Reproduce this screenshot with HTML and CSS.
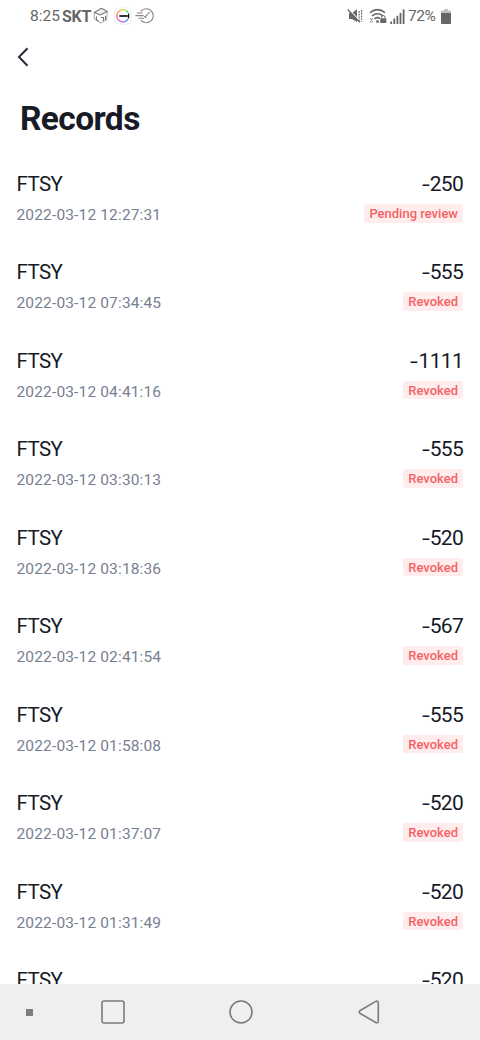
FILE: index.html
```html
<!DOCTYPE html>
<html lang="en">
<head>
<meta charset="utf-8">
<title>Records</title>
<link rel="stylesheet" href="styles.css">
</head>
<body>
<div class="screen">
  <header class="status">
    <span class="clock">8:25</span>
    <span class="carrier">SKT</span>
    <svg class="cube" width="16" height="18" viewBox="0 0 16 18" fill="none" stroke="#777" stroke-width="1.1" stroke-linejoin="round"><path d="M1.300 5.500V11.500L7.500 16l6-3 .8-8" stroke="#b5b5b5"/><path d="M1.300 5.500 8.500 1.200 14.300 4.500 7 8z" fill="#f2f2f2"/><path d="M3.500 9.500v3.300l2 1.400M8 10.500h2.500v3.500M12.500 9v4"/></svg>
    <svg class="app" width="18" height="18" viewBox="0 0 18 18" fill="none"><rect x="1" y="1" width="16" height="16" rx="2" fill="#fff" stroke="#eee"/><g stroke-width="1.2"><path d="M3 7.500A6.200 6.200 0 0 1 7 3" stroke="#ff9a3d"/><path d="M7 3a6.200 6.200 0 0 1 5 .6" stroke="#d3df35"/><path d="M12 3.600A6.200 6.200 0 0 1 14.900 7" stroke="#5bd879"/><path d="M14.600 11A6.200 6.200 0 0 1 11 14.600" stroke="#6b8cff"/><path d="M11 14.600A6.200 6.200 0 0 1 5 13.500" stroke="#b25cf5"/><path d="M5 13.500A6.200 6.200 0 0 1 3 7.500" stroke="#fa4ba5"/></g><path d="M5.300 9h8.500" stroke="#333" stroke-width="2"/><path d="M14.600 7v4" stroke="#111" stroke-width="1.3"/></svg>
    <svg class="gauge" width="19" height="18" viewBox="0 0 19 18" fill="none" stroke="#888" stroke-width="1.1" stroke-linecap="round"><path d="M6 4.200a7 7 0 1 1 0 9.200M2.200 6h5M.8 8.600h7.500M3.800 11.200h5"/><path d="m10.500 9.300 4-4M9.500 9.500l1.500 1"/></svg>
    <span class="spacer"></span>
    <svg width="16" height="16" viewBox="0 0 16 16" fill="none" stroke="#666"><path d="M2 5h3l5-3.700v12.800L5 11H2z" fill="#666" stroke="none"/><path d="m1.800 1.200 11.500 12.500" stroke="#fff" stroke-width="1.400"/><path d="m.8 1.500 12 12.700" stroke-width="1.300"/><path d="M12.200 3v10M14.600 2v12" stroke-dasharray="1.700 1.100" stroke-width="1.200"/></svg>
    <svg class="wifi" width="18" height="16" viewBox="0 0 18 16" fill="none" stroke="#666" stroke-width="1.600"><path d="M1 4.600q7.500-6 15 0M3 8q5.500-4.400 11 0M5.500 10.800q3-2.200 5.500-.2"/><path d="m1 10 1.500 2L4 10M1 14.500 2.500 12.700 4 14.500" stroke-width=".8"/><circle cx="8.500" cy="13.600" r="1.400" fill="#666" stroke="none"/><path d="M12.600 10.500V9.200a1.700 1.700 0 0 1 3.400 0v1.300" stroke-width="1"/><path d="M11.300 10.300h6V15h-6z" fill="#666" stroke="none"/></svg>
    <svg class="signal" width="15" height="15" viewBox="0 0 15 15" stroke="#666" stroke-width="1.800"><path d="M1.200 12.500V15M4.300 9.500V15M7.400 6.800V15M10.500 4V15M13.600 .5V15"/></svg>
    <span class="percent">72%</span>
    <svg class="battery" width="10" height="15" viewBox="0 0 10 15"><path d="M3 0h4v1.500h2q1 0 1 1V5H0V2.500q0-1 1-1h2z" fill="#c2c2c2"/><path d="M0 4h10v10q0 1-1 1H1q-1 0-1-1z" fill="#666"/></svg>
  </header>
  <nav class="topbar">
    <svg width="12" height="20" viewBox="0 0 12 20" fill="none" stroke="#292c38" stroke-width="2"><path d="M10.500 1.300 2 10l8.500 8.700"/></svg>
  </nav>
  <h1 class="title">Records</h1>
  <main class="list">
    <section class="row"><div><div class="name">FTSY</div><div class="date">2022-03-12 12:27:31</div></div><div class="right"><div class="amount"><span class="minus">-</span>250</div><div class="badge">Pending review</div></div></section>
    <section class="row"><div><div class="name">FTSY</div><div class="date">2022-03-12 07:34:45</div></div><div class="right"><div class="amount"><span class="minus">-</span>555</div><div class="badge">Revoked</div></div></section>
    <section class="row"><div><div class="name">FTSY</div><div class="date">2022-03-12 04:41:16</div></div><div class="right"><div class="amount"><span class="minus">-</span>1111</div><div class="badge">Revoked</div></div></section>
    <section class="row"><div><div class="name">FTSY</div><div class="date">2022-03-12 03:30:13</div></div><div class="right"><div class="amount"><span class="minus">-</span>555</div><div class="badge">Revoked</div></div></section>
    <section class="row"><div><div class="name">FTSY</div><div class="date">2022-03-12 03:18:36</div></div><div class="right"><div class="amount"><span class="minus">-</span>520</div><div class="badge">Revoked</div></div></section>
    <section class="row"><div><div class="name">FTSY</div><div class="date">2022-03-12 02:41:54</div></div><div class="right"><div class="amount"><span class="minus">-</span>567</div><div class="badge">Revoked</div></div></section>
    <section class="row"><div><div class="name">FTSY</div><div class="date">2022-03-12 01:58:08</div></div><div class="right"><div class="amount"><span class="minus">-</span>555</div><div class="badge">Revoked</div></div></section>
    <section class="row"><div><div class="name">FTSY</div><div class="date">2022-03-12 01:37:07</div></div><div class="right"><div class="amount"><span class="minus">-</span>520</div><div class="badge">Revoked</div></div></section>
    <section class="row"><div><div class="name">FTSY</div><div class="date">2022-03-12 01:31:49</div></div><div class="right"><div class="amount"><span class="minus">-</span>520</div><div class="badge">Revoked</div></div></section>
    <section class="row"><div><div class="name">FTSY</div></div><div class="right"><div class="amount"><span class="minus">-</span>520</div></div></section>
  </main>
  <footer class="navbar">
    <span class="dot"></span>
    <svg class="recent" width="24" height="24" viewBox="0 0 24 24"><rect x="1" y="1" width="22" height="22" rx="2"/></svg>
    <svg class="home" width="24" height="24" viewBox="0 0 24 24"><circle cx="12" cy="12" r="11"/></svg>
    <svg class="back" width="22" height="24" viewBox="0 0 22 24"><path d="M17.800 1.400 2.200 10.500q-2 1.500 0 3L17.800 22.500q2.500 1 2.500-1.500V3q0-2.500-2.500-1.600z"/></svg>
  </footer>
</div>
</body>
</html>
```
FILE: styles.css
```css
body {
  margin: 0;
  background: #fff;
  font-family: Roboto, "Liberation Sans", sans-serif;
  color: #171a27;
}
.screen {
  display: flex;
  flex-direction: column;
  width: 480px;
  height: 1040px;
  overflow: hidden;
}
.status {
  display: flex;
  align-items: center;
  flex: none;
  box-sizing: border-box;
  height: 32px;
  padding: 0 29px 0 30px;
  font-size: 15.5px;
  color: #666;
}
.clock { width: 32px; }
.carrier { width: 31px; font-weight: 700; font-size: 16px; letter-spacing: -0.3px; }
.app { margin-left: 5px; }
.gauge { margin-left: 3px; }
.spacer { flex: 1; }
.wifi { margin-left: 6px; }
.signal { margin-left: 3px; }
.percent { margin-left: 3px; width: 28px; letter-spacing: -0.4px; }
.battery { margin-left: 5px; }
.topbar {
  display: flex;
  align-items: center;
  flex: none;
  height: 50px;
  padding-left: 17px;
}
.title {
  flex: none;
  margin: 15px 0 0 20px;
  height: 73px;
  font-size: 33.5px;
  line-height: 43px;
  font-weight: 700;
  letter-spacing: -0.6px;
}
.list {
  flex: 1;
  min-height: 0;
  overflow: hidden;
  padding: 0 17px 0 16.5px;
}
.row {
  display: flex;
  justify-content: space-between;
  height: 88.45px;
}
.name, .amount {
  height: 28px;
  line-height: 28px;
  font-size: 20.5px;
}
.name { letter-spacing: -0.6px; }
.amount {
  font-size: 21px;
  letter-spacing: -0.7px;
}
.minus {
  display: inline-block;
  margin-right: 2px;
  transform: scaleX(1.35);
}
.date {
  margin-top: 7px;
  line-height: 20px;
  font-size: 15.5px;
  letter-spacing: 0.15px;
  color: #778091;
}
.right {
  display: flex;
  flex-direction: column;
  align-items: flex-end;
}
.badge {
  margin-top: 6px;
  padding: 0 5px;
  height: 18.5px;
  line-height: 19px;
  border-radius: 2px;
  background: #ffeded;
  color: #f46265;
  font-size: 13px;
  font-weight: 500;
  letter-spacing: 0;
}
.navbar {
  display: flex;
  align-items: center;
  flex: none;
  height: 56px;
  background: #efefef;
}
.navbar svg {
  fill: none;
  stroke: #7b7b7b;
  stroke-width: 1.6;
}
.dot {
  width: 7px;
  height: 7px;
  margin-left: 26px;
  background: #7e7e7e;
}
.recent { margin-left: 68px; }
.home { margin-left: 103.5px; }
.back { margin-left: 105px; }
```
